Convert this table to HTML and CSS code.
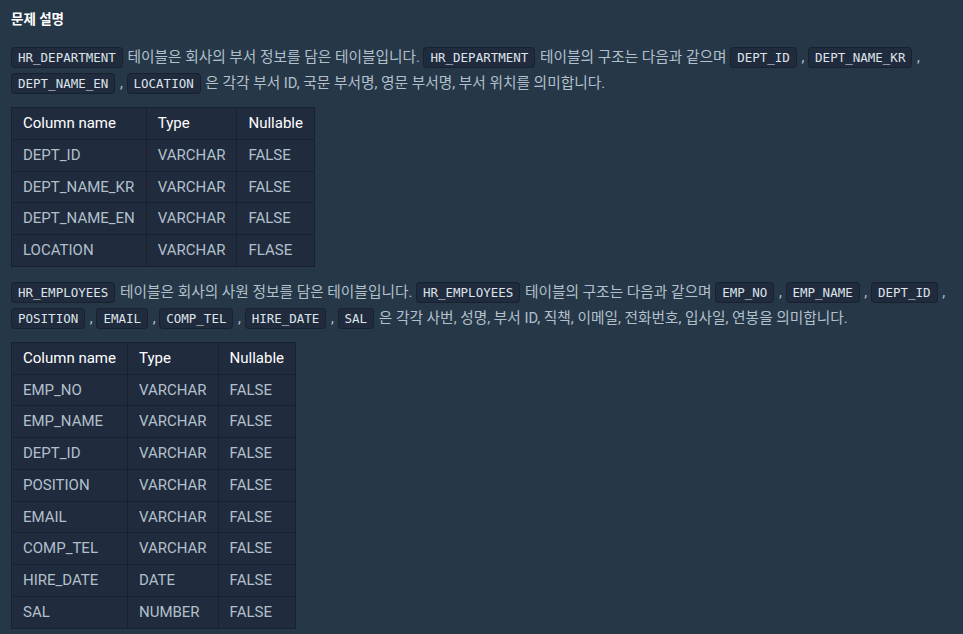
FILE: index.html
```html
<!DOCTYPE html>
<html lang="ko">
<head>
<meta charset="utf-8">
<title>문제 설명</title>
<link rel="stylesheet" href="styles.css">
</head>
<body>
<div class="guide">
  <h5 class="title">문제 설명</h5>
  <p class="desc"><code>HR_DEPARTMENT</code> 테이블은 회사의 부서 정보를 담은 테이블입니다. <code>HR_DEPARTMENT</code> 테이블의 구조는 다음과 같으며 <code>DEPT_ID</code> , <code>DEPT_NAME_KR</code> , <code>DEPT_NAME_EN</code> , <code>LOCATION</code> 은 각각 부서 ID, 국문 부서명, 영문 부서명, 부서 위치를 의미합니다.</p>
  <table class="schema">
    <thead>
      <tr><th>Column name</th><th>Type</th><th>Nullable</th></tr>
    </thead>
    <tbody>
      <tr><td>DEPT_ID</td><td>VARCHAR</td><td>FALSE</td></tr>
      <tr><td>DEPT_NAME_KR</td><td>VARCHAR</td><td>FALSE</td></tr>
      <tr><td>DEPT_NAME_EN</td><td>VARCHAR</td><td>FALSE</td></tr>
      <tr><td>LOCATION</td><td>VARCHAR</td><td>FLASE</td></tr>
    </tbody>
  </table>
  <p class="desc"><code>HR_EMPLOYEES</code> 테이블은 회사의 사원 정보를 담은 테이블입니다. <code>HR_EMPLOYEES</code> 테이블의 구조는 다음과 같으며 <code>EMP_NO</code> , <code>EMP_NAME</code> , <code>DEPT_ID</code> , <code>POSITION</code> , <code>EMAIL</code> , <code>COMP_TEL</code> , <code>HIRE_DATE</code> , <code>SAL</code> 은 각각 사번, 성명, 부서 ID, 직책, 이메일, 전화번호, 입사일, 연봉을 의미합니다.</p>
  <table class="schema">
    <thead>
      <tr><th>Column name</th><th>Type</th><th>Nullable</th></tr>
    </thead>
    <tbody>
      <tr><td>EMP_NO</td><td>VARCHAR</td><td>FALSE</td></tr>
      <tr><td>EMP_NAME</td><td>VARCHAR</td><td>FALSE</td></tr>
      <tr><td>DEPT_ID</td><td>VARCHAR</td><td>FALSE</td></tr>
      <tr><td>POSITION</td><td>VARCHAR</td><td>FALSE</td></tr>
      <tr><td>EMAIL</td><td>VARCHAR</td><td>FALSE</td></tr>
      <tr><td>COMP_TEL</td><td>VARCHAR</td><td>FALSE</td></tr>
      <tr><td>HIRE_DATE</td><td>DATE</td><td>FALSE</td></tr>
      <tr><td>SAL</td><td>NUMBER</td><td>FALSE</td></tr>
    </tbody>
  </table>
</div>
</body>
</html>
```
FILE: styles.css
```css
html, body {
  margin: 0;
  padding: 0;
  background: #263747;
}

body {
  font-family: Roboto, "Noto Sans CJK KR", sans-serif;
  color: #b2c0cc;
  min-height: 634px;
}

.guide {
  padding: 9px 11px 0 11px;
}

.title {
  margin: 0 0 15px 0;
  font-size: 13.5px;
  line-height: 20px;
  font-weight: 700;
  color: #ffffff;
}

.desc {
  margin: 0;
  font-size: 14.7px;
  line-height: 26px;
}

.desc code {
  font-family: "DejaVu Sans Mono", monospace;
  font-size: 12.5px;
  line-height: 1;
  color: #dde3ea;
  background: #202b3d;
  border: 1px solid #172130;
  border-radius: 4px;
  padding: 2px 6px;
  margin-right: 1px;
}

.schema {
  border-collapse: collapse;
  background: #202b3d;
  margin: 11px 0 12px 0;
  font-size: 15px;
}

.schema th,
.schema td {
  border: 1px solid #172130;
  padding: 5px 11px;
  line-height: 20.75px;
  text-align: left;
  white-space: nowrap;
}

.schema th {
  font-weight: 400;
  color: #ffffff;
}

.schema td {
  color: #b2c0cc;
}
```
